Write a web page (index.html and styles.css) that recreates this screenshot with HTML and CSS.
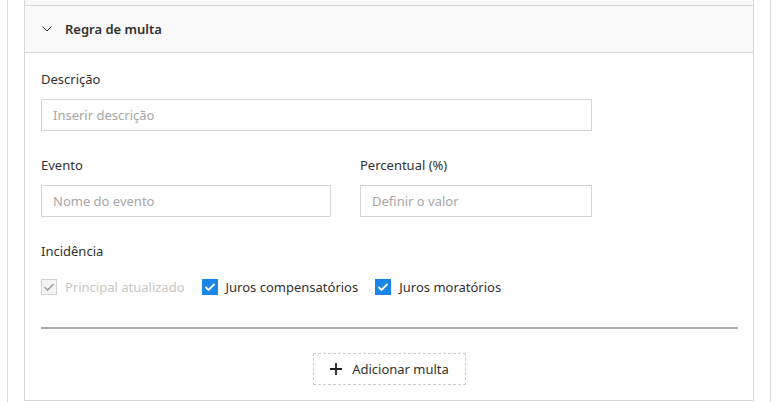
FILE: index.html
```html
<!DOCTYPE html>
<html lang="pt-BR">

<head>
    <meta charset="UTF-8">
    <meta name="viewport" content="width=device-width, initial-scale=1.0">
    <title>Regra de multa</title>
    <link rel="stylesheet" href="styles.css">
</head>

<body>
    <div class="page">
        <div class="panel">
            <div class="prev-section"></div>

            <div class="section-header">
                <svg class="chevron" width="10" height="6" viewBox="0 0 10 6">
                    <polyline points="0.5,0.5 5,5 9.5,0.5" fill="none" stroke="#323130" stroke-width="1"></polyline>
                </svg>
                <span class="section-title">Regra de multa</span>
            </div>

            <div class="section-body">
                <div class="field">
                    <label>Descrição</label>
                    <input type="text" class="input wide" placeholder="Inserir descrição">
                </div>

                <div class="field-row">
                    <div class="field">
                        <label>Evento</label>
                        <input type="text" class="input event" placeholder="Nome do evento">
                    </div>
                    <div class="field">
                        <label>Percentual (%)</label>
                        <input type="text" class="input percent" placeholder="Definir o valor">
                    </div>
                </div>

                <div class="field">
                    <label>Incidência</label>
                    <div class="checks">
                        <div class="check disabled">
                            <span class="box">
                                <svg width="12" height="10" viewBox="0 0 12 10">
                                    <polyline points="1.5,5 4.5,8 10.5,2" fill="none" stroke="#a19f9d" stroke-width="1.6"></polyline>
                                </svg>
                            </span>
                            <span>Principal atualizado</span>
                        </div>
                        <div class="check checked">
                            <span class="box">
                                <svg width="12" height="10" viewBox="0 0 12 10">
                                    <polyline points="1.5,5 4.5,8 10.5,2" fill="none" stroke="#ffffff" stroke-width="1.8"></polyline>
                                </svg>
                            </span>
                            <span>Juros compensatórios</span>
                        </div>
                        <div class="check checked">
                            <span class="box">
                                <svg width="12" height="10" viewBox="0 0 12 10">
                                    <polyline points="1.5,5 4.5,8 10.5,2" fill="none" stroke="#ffffff" stroke-width="1.8"></polyline>
                                </svg>
                            </span>
                            <span>Juros moratórios</span>
                        </div>
                    </div>
                </div>

                <hr class="divider">

                <div class="actions">
                    <button class="add-btn">
                        <svg width="12" height="12" viewBox="0 0 12 12">
                            <path d="M6 0 V12 M0 6 H12" stroke="#201f1e" stroke-width="1.8"></path>
                        </svg>
                        Adicionar multa
                    </button>
                </div>
            </div>
        </div>
    </div>
</body>

</html>
```

FILE: styles.css
```css
body {
    margin: 0;
    font-family: "Noto Sans", "Segoe UI", sans-serif;
    font-size: 13px;
    color: #323130;
    background-color: #ffffff;
}

.page {
    box-sizing: border-box;
    margin-left: 7px;
    width: 764px;
    height: 402px;
    padding: 0 16px;
    border-left: 1px solid #dcdcdc;
    border-right: 1px solid #dcdcdc;
}

.panel {
    border-left: 1px solid #d8d8d8;
    border-right: 1px solid #d8d8d8;
    border-bottom: 1px solid #d8d8d8;
}

.prev-section {
    height: 5px;
    background-color: #f8f8f8;
    border-bottom: 1px solid #d8d8d8;
}

.section-header {
    display: flex;
    align-items: center;
    height: 46px;
    padding-left: 17px;
    background-color: #f9f9f9;
    border-bottom: 1px solid #d8d8d8;
}

.chevron {
    margin-right: 13px;
}

.section-title {
    font-weight: 600;
    font-size: 13px;
}

.section-body {
    padding: 16px 15px 15px 16px;
}

.field label {
    display: block;
    line-height: 20px;
    margin-bottom: 10px;
}

.field-row {
    display: flex;
    gap: 29px;
    margin-top: 24px;
}

.field-row + .field {
    margin-top: 24px;
}

.input {
    box-sizing: border-box;
    height: 32px;
    padding: 0 11px;
    border: 1px solid #d4d4d4;
    font-family: inherit;
    font-size: 13px;
    color: #323130;
    outline: none;
}

.input::placeholder {
    color: #a6a6a6;
}

.wide {
    width: 551px;
}

.event {
    width: 290px;
}

.percent {
    width: 232px;
}

.checks {
    display: flex;
    gap: 17px;
    margin-top: 16px;
    line-height: 20px;
}

.check {
    display: flex;
    align-items: center;
    gap: 8px;
}

.box {
    box-sizing: border-box;
    width: 16px;
    height: 16px;
    display: flex;
    align-items: center;
    justify-content: center;
}

.checked .box {
    background-color: #1a86e8;
}

.disabled .box {
    border: 1px solid #d0d0d0;
    background-color: #f4f4f4;
}

.disabled span {
    color: #c8c6c4;
}

.divider {
    margin: 30px 0 0 0;
    border: none;
    height: 2px;
    background-color: #aaaaaa;
}

.actions {
    display: flex;
    justify-content: center;
    margin-top: 24px;
}

.add-btn {
    display: flex;
    align-items: center;
    gap: 10px;
    height: 32px;
    padding: 0 16px;
    border: 1px dashed #cccccc;
    background-color: #ffffff;
    font-family: inherit;
    font-size: 13px;
    color: #323130;
}
```
